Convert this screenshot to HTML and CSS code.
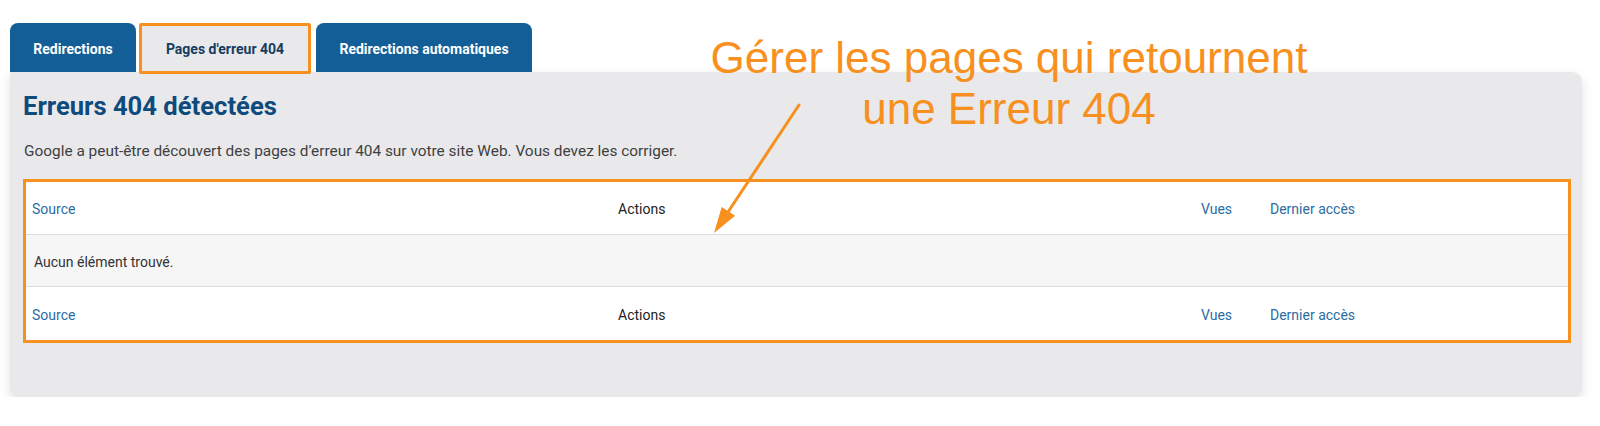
FILE: index.html
```html
<!DOCTYPE html>
<html>

<head>
    <link rel="stylesheet" href="styles.css">
</head>

<body>

    <div class="page">
        <div class="tabs">
            <div class="tab">Redirections</div>
            <div class="tab active">Pages d'erreur 404</div>
            <div class="tab">Redirections automatiques</div>
        </div>

        <div class="panel">
            <h2>Erreurs 404 détectées</h2>
            <p class="intro">Google a peut-être découvert des pages d’erreur 404 sur votre site Web. Vous devez les corriger.</p>

            <div class="list-table">
                <div class="row head">
                    <div class="cell link">Source</div>
                    <div class="cell">Actions</div>
                    <div class="cell link">Vues</div>
                    <div class="cell link">Dernier accès</div>
                </div>
                <div class="row empty">
                    <div class="cell">Aucun élément trouvé.</div>
                </div>
                <div class="row foot">
                    <div class="cell link">Source</div>
                    <div class="cell">Actions</div>
                    <div class="cell link">Vues</div>
                    <div class="cell link">Dernier accès</div>
                </div>
            </div>
        </div>
    </div>

    <!-- annotation over the screenshot -->
    <div class="note">Gérer les pages qui retournent<br>une Erreur 404</div>
    <svg class="arrow" width="1600" height="426" viewBox="0 0 1600 426">
        <line x1="799" y1="105" x2="728" y2="212" stroke="#f7901e" stroke-width="3" stroke-linecap="round" />
        <polygon points="714,233 735.1,215.7 721.7,206.9" fill="#f7901e" />
    </svg>

</body>

</html>
```
FILE: styles.css
```css
body {
    margin: 0;
    font-family: Roboto, "Liberation Sans", sans-serif;
    background-color: #fff;
    color: #222;
}

.page {
    padding: 23px 18px 0 10px;
}

.tabs {
    display: flex;
    height: 49px;
}

.tab {
    display: flex;
    align-items: center;
    padding: 3px 23px 0;
    margin-right: 4px;
    background-color: #135e96;
    color: #fff;
    font-size: 14px;
    font-weight: bold;
    border-radius: 8px 8px 0 0;
}

.tab:first-child {
    width: 126px;
    box-sizing: border-box;
    justify-content: center;
    margin-right: 3px;
}

.tab.active {
    position: relative;
    z-index: 1;
    width: 172px;
    height: 51px;
    box-sizing: border-box;
    justify-content: center;
    padding: 0;
    margin-right: 5px;
    background-color: #e9e9ec;
    color: #173c60;
    border: 3px solid #f7901e;
    border-radius: 2px;
}

.tab:last-child {
    width: 216px;
    box-sizing: border-box;
    justify-content: center;
}

.panel {
    height: 325px;
    box-sizing: border-box;
    padding: 19px 11px 0 13px;
    background-color: #e9e9ec;
    border-radius: 0 10px 9px 9px;
    box-shadow: 0 4px 12px rgba(0, 0, 0, 0.12);
}

h2 {
    margin: 0;
    font-size: 25.6px;
    line-height: 30px;
    font-weight: bold;
    color: #0e4a7b;
}

.intro {
    margin: 20px 0 18px 1px;
    font-size: 15.4px;
    line-height: 20px;
    color: #3f3f3f;
}

.list-table {
    border: 3px solid #f7901e;
    background-color: #fff;
    font-size: 14px;
}

.row {
    display: grid;
    grid-template-columns: 586px 583px 69px 1fr;
    align-items: center;
    height: 53px;
    padding-top: 2px;
    box-sizing: border-box;
}

.row.head {
    border-bottom: 1px solid #dcdcde;
}

.row.empty {
    display: flex;
    height: 52px;
    background-color: #f6f6f7;
    border-bottom: 1px solid #dcdcde;
}

.cell {
    padding-left: 6px;
}

.row.empty .cell {
    padding-left: 8px;
    color: #333;
}

.link {
    color: #2b6ca3;
}

.note {
    position: absolute;
    top: 32px;
    left: 709px;
    width: 600px;
    text-align: center;
    white-space: nowrap;
    font-family: "Liberation Sans", Arial, sans-serif;
    font-size: 44px;
    line-height: 51px;
    color: #f7901e;
}

.arrow {
    position: absolute;
    top: 0;
    left: 0;
    pointer-events: none;
}
```
